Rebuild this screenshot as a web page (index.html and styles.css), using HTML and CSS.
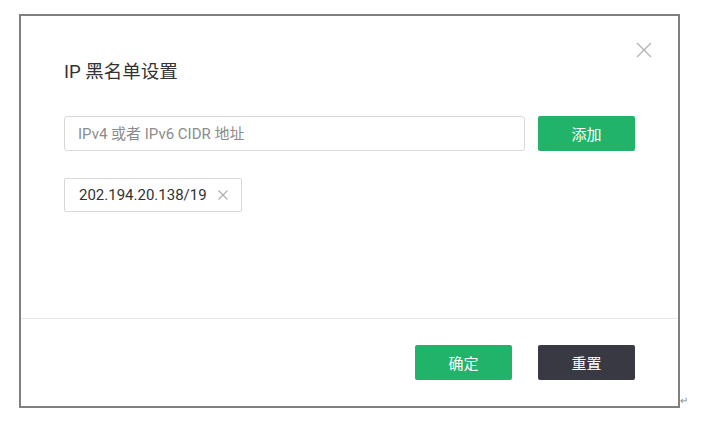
FILE: index.html
```html
<!DOCTYPE html>
<html lang="zh-CN">
<head>
<meta charset="utf-8">
<title>IP 黑名单设置</title>
<link rel="stylesheet" href="styles.css">
</head>
<body>
<div class="page">
  <div class="dialog">
    <button class="close" aria-label="关闭">
      <svg width="16" height="16" viewBox="0 0 16 16"><path d="M1 1L15 15M15 1L1 15" stroke="#b4b4b4" stroke-width="1.4" fill="none"/></svg>
    </button>
    <div class="body">
      <h1 class="title">IP 黑名单设置</h1>
      <div class="add-row">
        <input class="ip-input" type="text" placeholder="IPv4 或者 IPv6 CIDR 地址">
        <button class="btn btn-green">添加</button>
      </div>
      <div class="tags">
        <span class="tag">202.194.20.138/19<svg class="tag-x" width="10" height="10" viewBox="0 0 10 10"><path d="M0.5 0.5L9.5 9.5M9.5 0.5L0.5 9.5" stroke="#b0b0b0" stroke-width="1.2" fill="none"/></svg></span>
      </div>
    </div>
    <div class="footer">
      <button class="btn btn-green">确定</button>
      <button class="btn btn-dark">重置</button>
    </div>
  </div>
  <span class="mark">↵</span>
</div>
</body>
</html>
```
FILE: styles.css
```css
html, body {
  margin: 0;
  padding: 0;
  background: #fff;
}
body {
  font-family: "Roboto", "Noto Sans CJK SC", sans-serif;
  color: #333;
}
.page {
  display: flex;
  align-items: flex-end;
  padding: 14px 0 0 19px;
}
.dialog {
  position: relative;
  width: 657px;
  border: 2px solid #808080;
  background: #fff;
}
.close {
  position: absolute;
  top: 26px;
  right: 26px;
  width: 16px;
  height: 16px;
  padding: 0;
  border: 0;
  background: none;
  display: flex;
}
.body {
  height: 303px;
  box-sizing: border-box;
  padding: 44px 43px 0;
  border-bottom: 1px solid #e8e8e8;
}
.title {
  margin: 0;
  font-size: 18.5px;
  font-weight: 400;
  line-height: 24px;
  color: #333;
}
.add-row {
  display: flex;
  gap: 13px;
  margin-top: 32px;
}
.ip-input {
  flex: 1;
  height: 35px;
  box-sizing: border-box;
  border: 1px solid #d9d9d9;
  border-radius: 3px;
  padding: 0 13px;
  font-family: inherit;
  font-size: 15px;
  color: #333;
  outline: none;
}
.ip-input::placeholder {
  color: #8c8c8c;
}
.btn {
  width: 97px;
  height: 35px;
  border: 0;
  border-radius: 2px;
  font-family: inherit;
  font-size: 15px;
  color: #fff;
  padding: 0;
}
.btn-green {
  background: #22b36a;
}
.btn-dark {
  background: #393944;
}
.tags {
  display: flex;
  margin-top: 27px;
}
.tag {
  display: inline-flex;
  align-items: center;
  gap: 11px;
  height: 34px;
  box-sizing: border-box;
  padding: 0 13px 0 14px;
  border: 1px solid #d9d9d9;
  border-radius: 2px;
  font-size: 15px;
  color: #333;
}
.footer {
  display: flex;
  justify-content: flex-end;
  gap: 26px;
  padding: 26px 43px 26px;
}
.mark {
  font-size: 10px;
  line-height: 10px;
  color: #888;
  margin-bottom: 2px;
}
```
